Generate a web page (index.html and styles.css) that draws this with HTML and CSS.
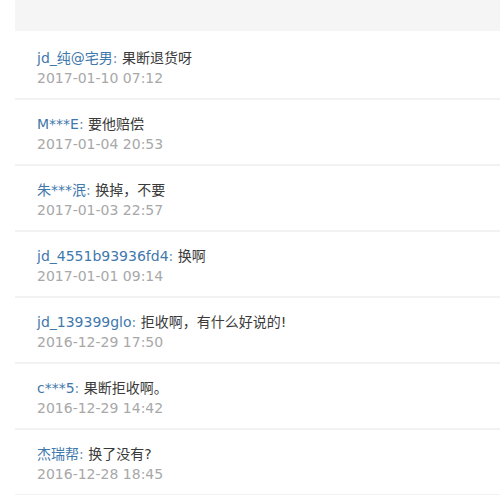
FILE: index.html
```html
<!DOCTYPE html>
<html lang="zh">
<head>
<meta charset="utf-8">
<link rel="stylesheet" href="styles.css">
</head>
<body>
<div class="page">
  <div class="header"></div>
  <ul class="list">
    <li class="item"><div class="line"><span class="name">jd_纯@宅男</span><span class="colon">:</span> <span class="msg">果断退货呀</span></div><div class="date">2017-01-10 07:12</div></li>
    <li class="item"><div class="line"><span class="name">M***E</span><span class="colon">:</span> <span class="msg">要他赔偿</span></div><div class="date">2017-01-04 20:53</div></li>
    <li class="item"><div class="line"><span class="name">朱***泯</span><span class="colon">:</span> <span class="msg">换掉，不要</span></div><div class="date">2017-01-03 22:57</div></li>
    <li class="item"><div class="line"><span class="name">jd_4551b93936fd4</span><span class="colon">:</span> <span class="msg">换啊</span></div><div class="date">2017-01-01 09:14</div></li>
    <li class="item"><div class="line"><span class="name">jd_139399glo</span><span class="colon">:</span> <span class="msg">拒收啊，有什么好说的!</span></div><div class="date">2016-12-29 17:50</div></li>
    <li class="item"><div class="line"><span class="name">c***5</span><span class="colon">:</span> <span class="msg">果断拒收啊。</span></div><div class="date">2016-12-29 14:42</div></li>
    <li class="item"><div class="line"><span class="name">杰瑞帮</span><span class="colon">:</span> <span class="msg">换了没有?</span></div><div class="date">2016-12-28 18:45</div></li>
  </ul>
</div>
</body>
</html>
```

FILE: styles.css
```css
html, body {
  margin: 0;
  padding: 0;
  background: #ffffff;
}
body {
  font-family: "DejaVu Sans", "Noto Sans CJK SC", sans-serif;
  font-size: 14px;
}
.page {
  padding-left: 15px;
}
.header {
  height: 31px;
  background: #f5f5f5;
}
.list {
  list-style: none;
  margin: 3px 0 0 0;
  padding: 0;
}
.item {
  padding: 14px 0 10px 22px;
  border-bottom: 2px solid #f2f2f2;
  line-height: 20px;
}
.name {
  color: #3f78ad;
}
.colon {
  color: #6a8fb2;
}
.msg {
  color: #3a3a3a;
}
.date {
  color: #a8a8a8;
}
```
